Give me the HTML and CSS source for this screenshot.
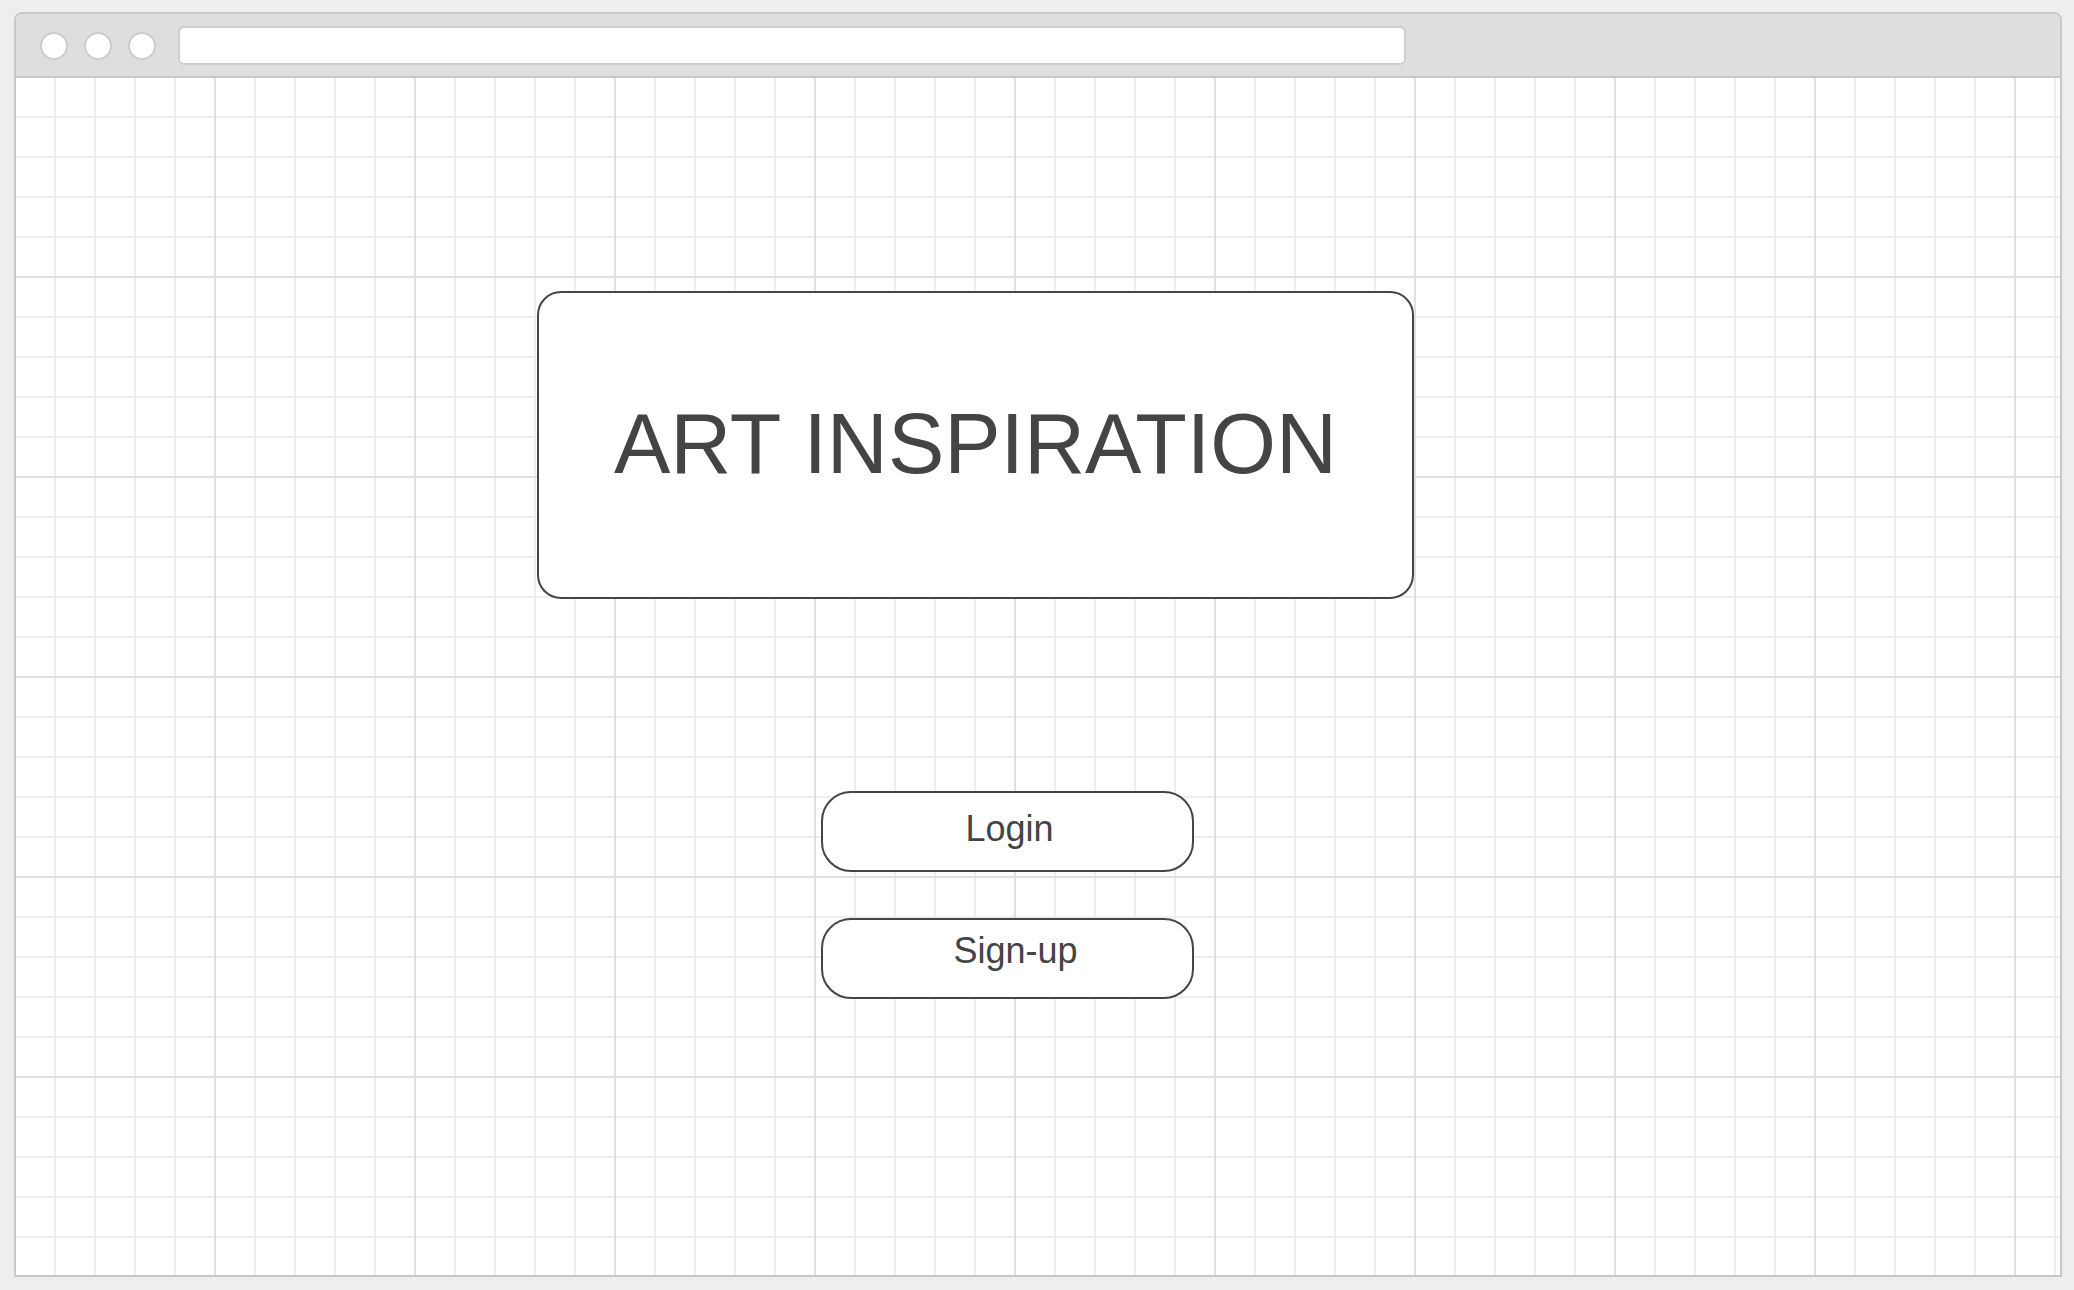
FILE: index.html
```html
<!DOCTYPE html>
<html lang="en">
<head>
<meta charset="utf-8">
<title>Art Inspiration</title>
<link rel="stylesheet" href="styles.css">
</head>
<body>
<div class="window">
  <div class="titlebar">
    <span class="dot"></span>
    <span class="dot"></span>
    <span class="dot"></span>
    <div class="urlbar"></div>
  </div>
  <div class="canvas">
    <div class="hero">ART INSPIRATION</div>
    <div class="actions">
      <button class="btn btn-login">Login</button>
      <button class="btn btn-signup">Sign-up</button>
    </div>
  </div>
</div>
</body>
</html>
```

FILE: styles.css
```css
html, body {
  margin: 0;
  padding: 0;
  background: #eeeeee;
}
body {
  padding: 12px 0 0 14px;
  font-family: "Liberation Sans", Arial, sans-serif;
  color: #444444;
}
.window {
  box-sizing: border-box;
  width: 2048px;
  height: 1265px;
  border: 2px solid #c8c8c8;
  border-radius: 8px 8px 0 0;
  display: flex;
  flex-direction: column;
  overflow: hidden;
  background: #ffffff;
}
.titlebar {
  box-sizing: border-box;
  height: 64px;
  flex: none;
  background: #dedede;
  border-bottom: 2px solid #c8c8c8;
  display: flex;
  align-items: center;
  padding-left: 24px;
  padding-top: 1px;
}
.dot {
  box-sizing: border-box;
  width: 28px;
  height: 28px;
  border-radius: 50%;
  background: #ffffff;
  border: 2px solid #cdcdcd;
  margin-right: 16px;
}
.urlbar {
  box-sizing: border-box;
  margin-left: 6px;
  width: 1228px;
  height: 39px;
  background: #ffffff;
  border: 2px solid #cdcdcd;
  border-radius: 6px;
}
.canvas {
  flex: 1;
  background-color: #ffffff;
  background-image:
    linear-gradient(to right, #e0e0e0 2px, transparent 2px),
    linear-gradient(to bottom, #e0e0e0 2px, transparent 2px),
    linear-gradient(to right, #eeeeee 2px, transparent 2px),
    linear-gradient(to bottom, #eeeeee 2px, transparent 2px);
  background-size: 200px 200px, 200px 200px, 40px 40px, 40px 40px;
  background-position: -2px -2px;
  display: flex;
  flex-direction: column;
}
.hero {
  box-sizing: border-box;
  margin: 213px 0 0 521px;
  width: 877px;
  height: 308px;
  background: #ffffff;
  border: 2px solid #454545;
  border-radius: 24px;
  display: flex;
  align-items: center;
  justify-content: center;
  font-size: 84.5px;
  line-height: 1;
  color: #444444;
  padding-bottom: 2px;
}
.actions {
  margin: 192px 0 0 805px;
  display: flex;
  flex-direction: column;
  gap: 46px;
}
.btn {
  box-sizing: border-box;
  width: 373px;
  height: 81px;
  background: #ffffff;
  border: 2px solid #454545;
  border-radius: 30px;
  font-family: "Liberation Sans", Arial, sans-serif;
  font-size: 36px;
  line-height: 1;
  color: #444444;
  display: flex;
  align-items: center;
  justify-content: center;
  padding: 0;
  margin: 0;
}
.btn-login {
  padding: 0 0 6px 4px;
}
.btn-signup {
  padding: 0 0 16px 16px;
}
```
